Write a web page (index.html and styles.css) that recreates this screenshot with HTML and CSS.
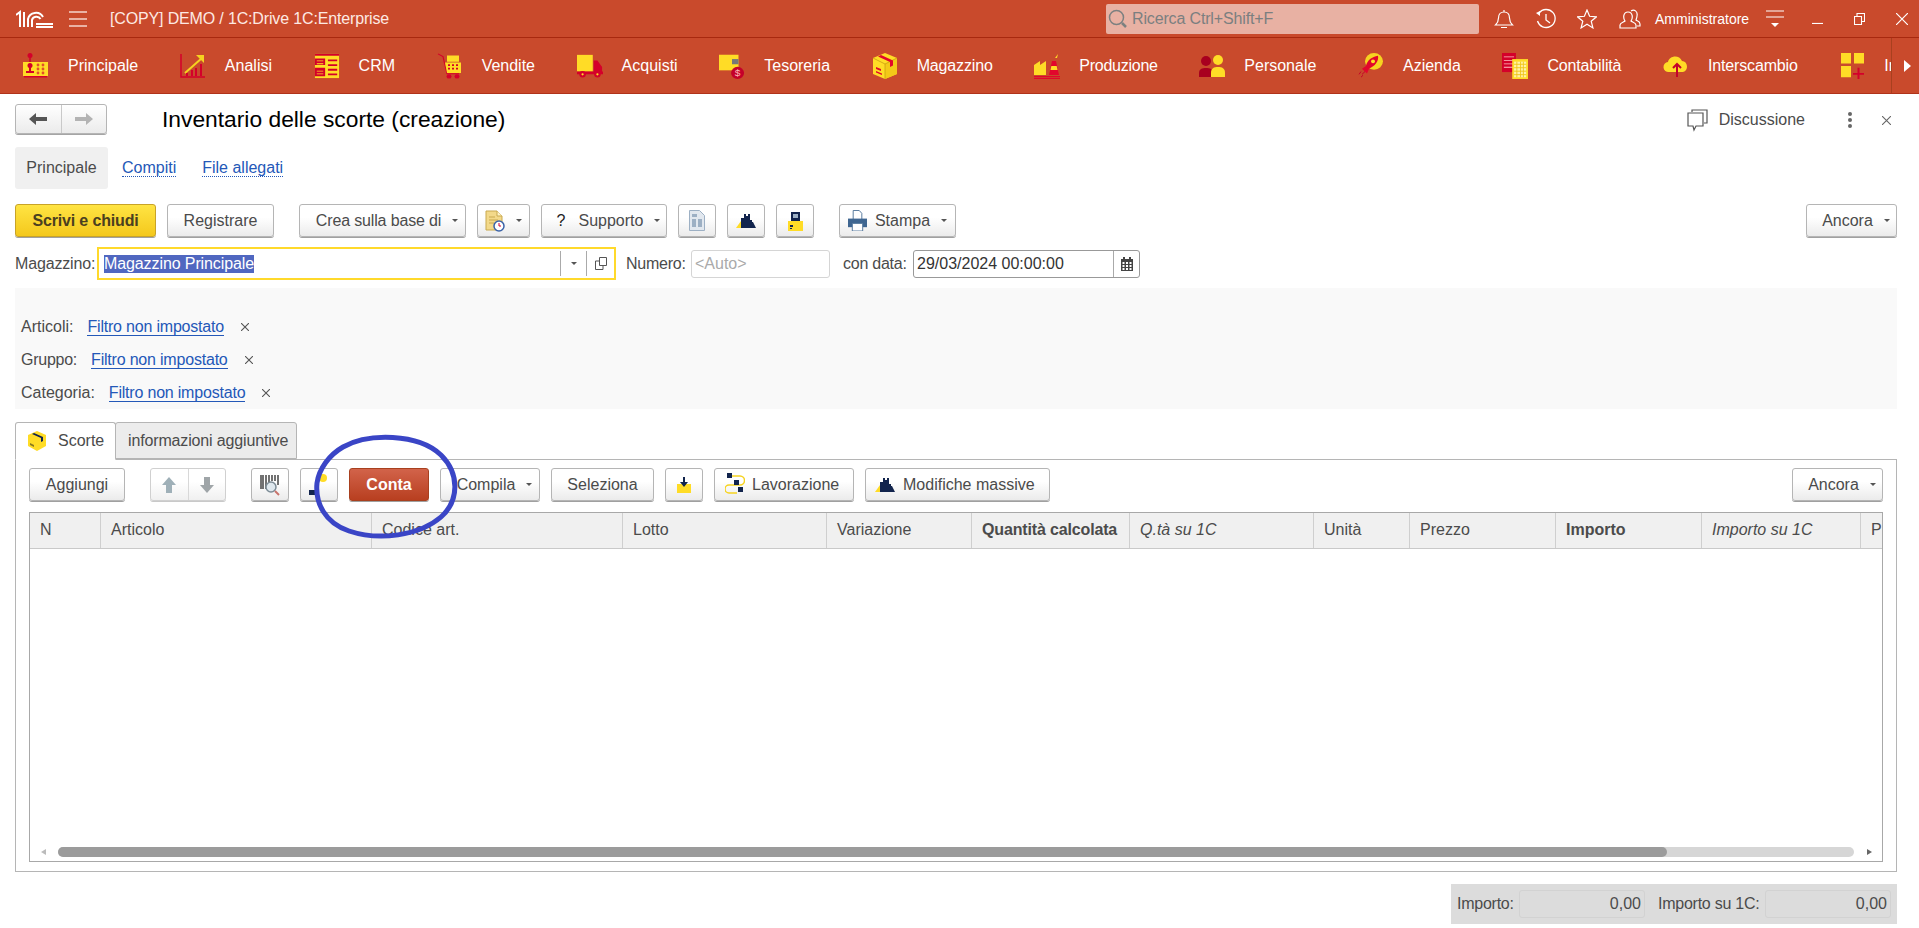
FILE: index.html
```html
<!DOCTYPE html>
<html lang="en">
<head>
  <meta charset="UTF-8">
  <title>Inventario delle scorte (creazione)</title>
  <link rel="stylesheet" href="styles.css">
</head>
<body>
  <!-- window title bar -->
  <div class="topbar">
    <svg class="logo" width="38" height="18" viewBox="0 0 38 18" fill="none" stroke="#fff" stroke-width="2"><path d="M0 5l4-3v15M8 2v15M12 17V9a8 7.500 0 0 1 15-2M16 17v-7a4.500 4 0 0 1 8.500-1M20 14h17M20 17h17"/></svg>
    <svg class="hamburger" width="18" height="16" viewBox="0 0 18 16" stroke="#f5d5cb" stroke-width="1.4"><path d="M0 1h18M0 8h18M0 15h18"/></svg>
    <span class="app-title">[COPY] DEMO / 1C:Drive 1C:Enterprise</span>
    <div class="search">
      <svg width="20" height="20" viewBox="0 0 20 20" fill="none" stroke="#7c8080"><circle cx="8.5" cy="8.5" r="7" stroke-width="1.5"/><path d="M14 14l4 4" stroke-width="2.5"/></svg>
      <span class="tight">Ricerca Ctrl+Shift+F</span>
    </div>
    <svg class="t-bell" width="20" height="20" viewBox="0 0 20 20" fill="none" stroke="#fff" stroke-width="1.2"><path d="M1.5 16c2-2 3-3 3-7 0-4 2.500-6 5.500-6s5.500 2 5.500 6c0 4 1 5 3 7zM10 3V1M7 18.500h6"/></svg>
    <svg class="t-hist" width="22" height="22" viewBox="0 0 22 22" fill="none" stroke="#fff" stroke-width="1.3"><path d="M4 5a9 9 0 1 1-1.500 8M11 6v6l4 3"/><path d="M1 5l4-2v5z" fill="#fff" stroke="none"/></svg>
    <svg class="t-star" width="20" height="20" viewBox="0 0 20 20" fill="none" stroke="#fff" stroke-width="1.2"><path d="M10 1l2.600 6.300 6.900.500-5.300 4.400 1.700 6.700L10 15.300l-5.900 3.600 1.700-6.700L.5 7.800l6.900-.5z"/></svg>
    <svg class="t-user" width="22" height="20" viewBox="0 0 22 20" fill="none" stroke="#fff" stroke-width="1.2"><path d="M1 19v-3c0-2 4-3 5-4-2-3-2-9 3-9s5 6 3 9c1 1 5 2 5 4v3zM12 2c3-2 7 0 6 5 0 2-1 3-1 4 1 1 4 1 4 4v2h-3"/></svg>
    <span class="user-name">Amministratore</span>
    <svg class="t-menu" width="18" height="18" viewBox="0 0 18 18" stroke="#fff" stroke-width="1.2"><path d="M0 1h18M0 7h18"/><path d="M5 13h8l-4 4z" fill="#fff" stroke="none"/></svg>
    <svg class="t-min" width="11" height="11" viewBox="0 0 11 11" stroke="#fff" stroke-width="1.2"><path d="M0 10.500h11"/></svg>
    <svg class="t-max" width="11" height="12" viewBox="0 0 11 12" fill="none" stroke="#fff" stroke-width="1.1"><path d="M.5 3.500h7v8h-7zM3 3V.5h7.500v8H8"/></svg>
    <svg class="t-close" width="12" height="12" viewBox="0 0 12 12" stroke="#fff" stroke-width="1.2"><path d="M0 0l12 12M12 0L0 12"/></svg>
  </div>

  <!-- section panel -->
  <div class="sections">
    <div class="section-list">
      <div class="section">
        <svg class="sec-icon" viewBox="0 0 26 26"><circle cx="7" cy="2.500" r="2.500" fill="#d4002a"/><path d="M6.200 4h1.600v6H6.200z" fill="#d4002a"/><path d="M0 9h25v14H0z" fill="#ffdc26"/><path d="M1 23h23v1.500H1z" fill="#d4002a"/><circle cx="7" cy="12.500" r="2.500" fill="#d4002a"/><path d="M6 14h2v4H6zM3 18h8v2H3z" fill="#d4002a"/><g fill="#e2502a"><circle cx="15" cy="12" r="1.400"/><circle cx="20" cy="12" r="1.400"/><circle cx="15" cy="16" r="1.400"/><circle cx="20" cy="16" r="1.400"/><circle cx="15" cy="20" r="1.400"/><circle cx="20" cy="20" r="1.400"/></g></svg>
        <span>Principale</span>
      </div>
      <div class="section">
        <svg class="sec-icon" viewBox="0 0 26 26"><path d="M1 1v23h24" fill="none" stroke="#d4002a" stroke-width="1.500"/><path d="M5 20l17-15" stroke="#f5d320" stroke-width="2" fill="none"/><path d="M16 2h8v8z" fill="#f5d320"/><path d="M6 20h2v3H6zM11 17h2v6h-2zM15 15h2v8h-2zM20 11h2v12h-2z" fill="#d4002a"/></svg>
        <span>Analisi</span>
      </div>
      <div class="section">
        <svg class="sec-icon" viewBox="0 0 28 26"><path d="M1 0h26v26H1z" fill="#ffdc26"/><path d="M1 0h26v2H1zM1 5h11v7H1zM1 15h11v9H1z" fill="#d4002a"/><path d="M3 7h7v1H3zM3 10h7v1H3zM3 18h7v1H3zM3 21h7v1H3z" fill="#ffdc26"/><path d="M15 6h10v2H15zM15 11h10v2H15zM15 16h10v2H15zM15 21h10v2H15z" fill="#d4002a"/></svg>
        <span>CRM</span>
      </div>
      <div class="section">
        <svg class="sec-icon" viewBox="0 0 26 30" preserveAspectRatio="none"><path d="M1 1l5 3 4 20h12" fill="none" stroke="#d4002a" stroke-width="1.200"/><path d="M10 3h12v7H10zM8 11h16v12H10z" fill="#ffdc26"/><path d="M11 13h2v2h-2zM15 13h2v2h-2zM19 13h2v2h-2zM11 17h2v2h-2zM15 17h2v2h-2zM19 17h2v2h-2z" fill="#d4002a"/><circle cx="12" cy="27" r="2.500" fill="#d4002a"/><circle cx="20" cy="27" r="2.500" fill="#d4002a"/></svg>
        <span>Vendite</span>
      </div>
      <div class="section">
        <svg class="sec-icon" viewBox="0 0 28 26"><path d="M0 1h17v18H0z" fill="#ffdc26"/><path d="M18 7h4l5 7v5H18zM0 19h28v3H0z" fill="#d4002a"/><circle cx="6" cy="22" r="3.500" fill="#d4002a"/><circle cx="22" cy="22" r="3.500" fill="#d4002a"/><circle cx="6" cy="22" r="1.200" fill="#ffdc26"/><circle cx="22" cy="22" r="1.200" fill="#ffdc26"/></svg>
        <span>Acquisti</span>
      </div>
      <div class="section">
        <svg class="sec-icon" viewBox="0 0 28 30" preserveAspectRatio="none"><path d="M0 2h21v18H0z" fill="#ffdc26"/><path d="M14 7h7v6h-7z" fill="#777"/><circle cx="20" cy="23" r="7" fill="#c4002a"/><text class="coin" x="20" y="27">$</text></svg>
        <span>Tesoreria</span>
      </div>
      <div class="section">
        <svg class="sec-icon" viewBox="0 0 26 26"><path d="M13 0l12 5v16l-12 5-12-5V5z" fill="#ffdc26"/><path d="M13 11l12-6v16l-12 5z" fill="#f3c918"/><path d="M13 11v15M1 5l12 6 12-6" fill="none" stroke="#c99e10" stroke-width=".8"/><path d="M6 3.500L9 2l12 5.500v5l-3 1.500V9z" fill="#e2062c"/><path d="M4 14l5 2v2l-5-2zM4 18l6 2.500V22l-6-2.500z" fill="#e2062c"/></svg>
        <span class="tight">Magazzino</span>
      </div>
      <div class="section">
        <svg class="sec-icon" viewBox="0 0 26 26"><path d="M0 12l6-4v4l6-4v14H0z" fill="#ffdc26"/><path d="M15 22l3-14h4l3 14z" fill="#e2062c"/><path d="M17.300 13h5.400l.8 4h-7z" fill="#ffdc26"/><path d="M21 5l3-4-1 4z" fill="#ffdc26"/><path d="M0 23h26v1.200H0zM0 25h26v1H0z" fill="#e2062c"/></svg>
        <span class="tighter">Produzione</span>
      </div>
      <div class="section">
        <svg class="sec-icon" viewBox="0 0 26 26"><circle cx="7" cy="8" r="5" fill="#a8001f"/><path d="M0 24v-4c0-4 3-5 7-5s7 1 7 5v4z" fill="#a8001f"/><circle cx="19" cy="7" r="5" fill="#ffdc26"/><path d="M12 24v-4c0-5 3-6 7-6s7 1 7 6v4z" fill="#ffdc26"/></svg>
        <span>Personale</span>
      </div>
      <div class="section">
        <svg class="sec-icon" viewBox="0 0 26 28" preserveAspectRatio="none"><circle cx="16" cy="9" r="9" fill="#f6d320"/><path d="M20 3c1 6-3 11-9 14l-2 5-3-3-2-2 4-3c1-6 6-10 12-11z" fill="#e2062c"/><path d="M7 20l-3 3M5 24l-2 2M3 20l-2 3" stroke="#c4002a"/><circle cx="15" cy="9" r="2" fill="#ffdc26"/></svg>
        <span>Azienda</span>
      </div>
      <div class="section">
        <svg class="sec-icon" viewBox="0 0 28 30" preserveAspectRatio="none"><path d="M0 0h15v22H0z" fill="#d4002a"/><path d="M2 4h11v1H2zM2 8h11v1H2zM2 12h11v1H2zM2 16h11v1H2z" fill="#ffc2c2"/><path d="M11 7h17v23H11z" fill="#ffdc26"/><path d="M13 10h13v18H13z" fill="#fff3a8"/><path d="M13 13h13M13 17h13M13 21h13M13 25h13M16 10v18M20 10v18M23 10v18" stroke="#f0c514"/></svg>
        <span class="tight">Contabilità</span>
      </div>
      <div class="section">
        <svg class="sec-icon" viewBox="0 0 26 26"><path d="M6 19a5 5 0 0 1-1-10c1-6 11-8 14-1 6 0 7 10 1 11z" fill="#ffdc26"/><path d="M14 24V12M10 15l4-4 4 4" fill="none" stroke="#c4002a" stroke-width="2"/></svg>
        <span class="tight">Interscambio</span>
      </div>
      <div class="section">
        <svg class="sec-icon" viewBox="0 0 26 30" preserveAspectRatio="none"><path d="M2 0h10v12H2zM15 0h10v12H15zM2 15h10v13H2z" fill="#ffdc26"/><path d="M14 23h11v2H14zM18.500 17h2v13h-2z" fill="#d4002a"/></svg>
        <span>Impostazioni</span>
      </div>
    </div>
    <div class="sections-more"><svg width="7" height="12" viewBox="0 0 7 12"><path d="M0 0l7 6-7 6z" fill="#fff"/></svg></div>
  </div>

  <div class="main">
    <div class="form-head">
      <div class="nav-pair">
        <span class="nav-cell">
          <svg width="18" height="12" viewBox="0 0 18 12"><path d="M0 6l7-6v4h11v4H7v4z" fill="#555"/></svg>
        </span>
        <span class="nav-cell">
          <svg width="18" height="12" viewBox="0 0 18 12"><path d="M18 6l-7-6v4H0v4h11v4z" fill="#b3b3b3"/></svg>
        </span>
      </div>
      <h1 class="form-title">Inventario delle scorte (creazione)</h1>
      <div class="head-tools">
        <svg class="disc-icon" width="21" height="23" viewBox="0 0 21 23" fill="none" stroke="#555" stroke-width="1.200"><path d="M5 3V1h15v13h-3M1 4h15v13H9l-2 4-1-4H1z"/></svg>
        <span class="disc-label">Discussione</span>
        <svg class="dots" width="4" height="18" viewBox="0 0 4 18" fill="#666"><circle cx="2" cy="3" r="2"/><circle cx="2" cy="9" r="2"/><circle cx="2" cy="15" r="2"/></svg>
        <svg class="head-close" width="9" height="9" viewBox="0 0 9 9" stroke="#666" stroke-width="1.100"><path d="M0 0l9 9M9 0L0 9"/></svg>
      </div>
    </div>

    <div class="views">
      <span class="view-active">Principale</span>
      <a class="view-link view-compiti">Compiti</a>
      <a class="view-link view-file">File allegati</a>
    </div>

    <div class="toolbar toolbar-main">
      <button class="btn btn-primary w-scrivi"><span class="tight">Scrivi e chiudi</span></button>
      <button class="btn w-reg">Registrare</button>
      <button class="btn has-caret w-crea group-start"><span class="tight">Crea sulla base di</span><i class="caret"></i></button>
      <button class="btn w-docclock">
        <svg width="20" height="22" viewBox="0 0 20 22"><path d="M1 1h11l5 5v14H1z" fill="#f3d98a" stroke="#c9a94f"/><path d="M12 1v5h5" fill="#fff3c8" stroke="#c9a94f"/><path d="M4 7h6M4 10h9M4 13h5" stroke="#c9a94f"/><circle cx="14" cy="16" r="5" fill="#fff" stroke="#3b63a8" stroke-width="1.500"/><path d="M14 13v3h2" stroke="#d4002a" fill="none"/></svg>
        <i class="caret"></i>
      </button>
      <button class="btn has-caret w-supporto"><span class="qmark">?</span>Supporto<i class="caret"></i></button>
      <button class="btn btn-icon">
        <svg width="16" height="21" viewBox="0 0 16 21"><path d="M.5.5h10l5 5v15H.5z" fill="#e2e8ef" stroke="#9db0c4"/><path d="M3 4h5v3H3zM3 9h4v8H3zM9 9h4v8H9z" fill="#9db0c4"/></svg>
      </button>
      <button class="btn btn-icon">
        <svg width="20" height="14" viewBox="0 0 20 14"><path d="M0 14l5-7h5v7z" fill="#ffdc26"/><path d="M5 14V4h3V0h2v2h2V0h2v6h2v2h1l3 6z" fill="#12244d"/></svg>
      </button>
      <button class="btn btn-icon">
        <svg width="15" height="20" viewBox="0 0 15 20"><path d="M3 1h9v9H3z" fill="#12244d"/><path d="M5 3h5v4H5z" fill="#9db0c4"/><path d="M0 10h15v10H0z" fill="#ffdc26"/><path d="M2 14h3v2H2zM2 17h2v1H2z" fill="#12244d"/></svg>
      </button>
      <button class="btn w-stampa group-start">
        <svg class="print-icon" width="19" height="21" viewBox="0 0 22 22" preserveAspectRatio="none"><path d="M6 .5h7l3 3V10H6z" fill="#fff" stroke="#4a6f96"/><path d="M0 9h22v9H0z" fill="#3f6691"/><path d="M5 14h12v8H5z" fill="#fff" stroke="#4a6f96"/></svg>
        Stampa<i class="caret"></i>
      </button>
      <button class="btn has-caret w-ancora push-right">Ancora<i class="caret"></i></button>
    </div>

    <div class="fields">
      <label class="lbl lbl-mag"><span class="tight">Magazzino:</span></label>
      <div class="field-focus">
        <span class="selected">Magazzino Principale</span>
        <span class="field-tool tool-caret"><i class="caret"></i></span>
        <span class="field-tool tool-open">
          <svg width="12" height="13" viewBox="0 0 12 13" fill="none" stroke="#555"><path d="M4.500.5h7v8h-7zM4 4H.5v8.500H8V9"/></svg>
        </span>
      </div>
      <label class="lbl lbl-num"><span class="tighter">Numero:</span></label>
      <div class="input input-auto">&lt;Auto&gt;</div>
      <label class="lbl lbl-date"><span class="tighter">con data:</span></label>
      <div class="input input-date">
        <span class="date-val">29/03/2024 00:00:00</span>
        <span class="date-tool">
          <svg width="12" height="14" viewBox="0 0 12 14"><path d="M0 2h12v12H0z" fill="#444"/><path d="M2 0h2v3H2zM8 0h2v3H8z" fill="#444"/><path d="M1.500 5h2v2h-2zM5 5h2v2H5zM8.500 5h2v2h-2zM1.500 8h2v2h-2zM5 8h2v2H5zM8.500 8h2v2h-2zM1.500 11h2v2h-2zM5 11h2v2H5zM8.500 11h2v2h-2z" fill="#fff"/></svg>
        </span>
      </div>
    </div>

    <div class="filters">
      <div class="filter-row">
        <span>Articoli:</span><a class="filter-link">Filtro non impostato</a>
        <svg class="filter-x" width="8" height="8" viewBox="0 0 8 8" stroke="#555" stroke-width="1.100"><path d="M0 0l8 8M8 0L0 8"/></svg>
      </div>
      <div class="filter-row">
        <span class="tighter">Gruppo:</span><a class="filter-link">Filtro non impostato</a>
        <svg class="filter-x" width="8" height="8" viewBox="0 0 8 8" stroke="#555" stroke-width="1.100"><path d="M0 0l8 8M8 0L0 8"/></svg>
      </div>
      <div class="filter-row">
        <span>Categoria:</span><a class="filter-link">Filtro non impostato</a>
        <svg class="filter-x" width="8" height="8" viewBox="0 0 8 8" stroke="#555" stroke-width="1.100"><path d="M0 0l8 8M8 0L0 8"/></svg>
      </div>
    </div>

    <div class="tabs">
      <div class="tab tab-on">
        <svg class="tab-icon" width="20" height="20" viewBox="0 0 20 20"><path d="M10 0l9 4v11l-9 5-9-5V4z" fill="#ffdc26"/><path d="M5 3l2-1 9 4v4l-2 1V7z" fill="#12244d"/><path d="M3 12l4 2v2l-4-2z" fill="#8a7a20"/></svg>
        Scorte
      </div>
      <div class="tab tab-off"><span class="tight">informazioni aggiuntive</span></div>
    </div>

    <div class="tab-panel">
      <div class="toolbar toolbar-table">
        <button class="btn w-aggiungi">Aggiungi</button>
        <div class="btn-pair group-start">
          <span class="pair-cell"><svg width="14" height="16" viewBox="0 0 14 16"><path d="M7 0l7 8H10v8H4V8H0z" fill="#9fb0b8"/></svg></span>
          <span class="pair-cell"><svg width="14" height="16" viewBox="0 0 14 16"><path d="M7 16l7-8H10V0H4v8H0z" fill="#9fa5a8"/></svg></span>
        </div>
        <button class="btn btn-icon group-start">
          <svg width="20" height="22" viewBox="0 0 20 22"><path d="M1 1v14M3 1v14M6 1v14M9 1v10M12 1v6M15 1v6M18 1v10" stroke="#444" stroke-width="1.500"/><circle cx="11" cy="13" r="5" fill="#dfe8ee" stroke="#7d8c96" stroke-width="1.500"/><path d="M15 17l4 4" stroke="#c9746c" stroke-width="2"/></svg>
        </button>
        <button class="btn btn-icon">
          <svg width="20" height="22" viewBox="0 0 20 22"><path d="M0 16h6v5H0z" fill="#12244d"/><circle cx="14" cy="4" r="4" fill="#ffdc26"/></svg>
        </button>
        <button class="btn btn-red w-conta">Conta</button>
        <button class="btn has-caret w-compila">Compila<i class="caret"></i></button>
        <button class="btn w-seleziona">Seleziona</button>
        <button class="btn btn-icon">
          <svg width="14" height="16" viewBox="0 0 14 16"><path d="M0 7h14v9H0z" fill="#ffdc26"/><path d="M6 0h2v5h3l-4 5-4-5h3z" fill="#12244d"/></svg>
        </button>
        <button class="btn w-lav">
          <svg class="lav-icon" width="20" height="24" viewBox="0 0 20 24"><path d="M7 3h8a3 3 0 0 1 0 9H4a4 4 0 0 0 0 8h8" fill="none" stroke="#f6d320" stroke-width="1.500"/><path d="M2 0h5v5H2zM9 7h5v5H9zM13 14h5v5h-5z" fill="#12244d"/></svg>
          Lavorazione
        </button>
        <button class="btn w-mod">
          <svg class="mod-icon" width="20" height="14" viewBox="0 0 20 14"><path d="M0 14l5-7h5v7z" fill="#ffdc26"/><path d="M5 14V4h3V0h2v2h2V0h2v6h2v2h1l3 6z" fill="#12244d"/></svg>
          Modifiche massive
        </button>
        <button class="btn has-caret w-ancora2 push-right">Ancora<i class="caret"></i></button>
      </div>

      <div class="grid">
        <div class="grid-head">
          <div class="cell">N</div>
          <div class="cell">Articolo</div>
          <div class="cell">Codice art.</div>
          <div class="cell">Lotto</div>
          <div class="cell">Variazione</div>
          <div class="cell cell-bold"><span class="tight">Quantità calcolata</span></div>
          <div class="cell cell-ital">Q.tà su 1C</div>
          <div class="cell">Unità</div>
          <div class="cell">Prezzo</div>
          <div class="cell cell-bold">Importo</div>
          <div class="cell cell-ital">Importo su 1C</div>
          <div class="cell cell-last">Prezzo su 1C</div>
        </div>
        <div class="grid-body"></div>
        <div class="scroll">
          <i class="scroll-left"></i>
          <div class="scroll-track"><div class="scroll-thumb"></div></div>
          <i class="scroll-right"></i>
        </div>
      </div>
    </div>

    <div class="totals">
      <div class="totals-box">
        <span class="tot-lbl1 tighter">Importo:</span>
        <span class="tot-field">0,00</span>
        <span class="tot-lbl2 tighter">Importo su 1C:</span>
        <span class="tot-field">0,00</span>
      </div>
    </div>
  </div>

  <!-- hand drawn annotation over the screenshot -->
  <svg class="annotation" width="150" height="110" viewBox="0 0 150 110" fill="none" stroke="#3a45c6" stroke-width="5" stroke-linecap="round"><path d="M30 14C55 0 105 0 128 22c19 19 18 46 0 62-22 19-62 24-92 14C12 90 2 70 4 50 6 36 16 22 30 14z"/></svg>
</body>
</html>
```

FILE: styles.css
```css
* {
  box-sizing: border-box;
}
html, body {
  margin: 0;
  height: 928px;
  overflow: hidden;
}
body {
  font-family: "Liberation Sans", Arial, sans-serif;
  font-size: 16px;
  color: #4b4b4b;
  background: #fff;
  position: relative;
}
.tight {
  letter-spacing: -0.15px;
}
.tighter {
  letter-spacing: -0.25px;
}

/* title bar */
.topbar {
  height: 38px;
  background: #c94a2c;
  border-bottom: 1px solid #a8290f;
  display: flex;
  align-items: center;
  color: #fff;
}
.logo {
  margin-left: 16px;
}
.hamburger {
  margin-left: 15px;
}
.app-title {
  margin-left: 23px;
  width: 996px;
  color: #fde9e3;
  white-space: nowrap;
  letter-spacing: -0.15px;
}
.search {
  width: 373px;
  height: 30px;
  background: #e8b1a3;
  border-radius: 2px;
  color: #7b7f80;
  display: flex;
  align-items: center;
  padding-left: 2px;
  gap: 4px;
}
.t-bell {
  margin-left: 15px;
}
.t-hist {
  margin-left: 21px;
}
.t-star {
  margin-left: 20px;
}
.t-user {
  margin-left: 22px;
}
.user-name {
  margin-left: 14px;
  font-size: 14px;
  width: 94px;
  white-space: nowrap;
}
.t-menu {
  margin-left: 17px;
}
.t-min {
  margin-left: 28px;
}
.t-max {
  margin-left: 31px;
}
.t-close {
  margin-left: 31px;
}

/* sections */
.sections {
  height: 56px;
  background: #c94a2c;
  border-bottom: 1px solid #b0331a;
  display: flex;
  color: #fff;
}
.section-list {
  width: 1891px;
  display: flex;
  align-items: center;
  gap: 41.6px;
  padding-left: 23px;
  overflow: hidden;
  white-space: nowrap;
}
.section {
  display: flex;
  align-items: center;
  gap: 19px;
  flex: none;
}
.sec-icon {
  width: 26px;
  height: 26px;
  flex: none;
}
.coin {
  font-size: 11px;
  fill: #ffb4b4;
  text-anchor: middle;
}
.sections-more {
  flex: 1;
  border-left: 1px solid #a8401f;
  display: flex;
  align-items: center;
  padding-left: 12px;
}

/* form */
.main {
  padding: 0 22px 0 15px;
}
.form-head {
  margin-top: 10px;
  height: 30px;
  display: flex;
  align-items: center;
}
.nav-pair {
  width: 92px;
  height: 30px;
  display: flex;
  border: 1px solid #b5b5b5;
  border-radius: 3px;
  background: linear-gradient(#fff, #ebebeb);
  box-shadow: 0 1px 0 #a5a5a5;
}
.nav-cell {
  flex: 1;
  display: flex;
  align-items: center;
  justify-content: center;
}
.nav-cell + .nav-cell {
  border-left: 1px solid #c9c9c9;
}
.form-title {
  margin: 0 0 0 55px;
  font-size: 22.8px;
  font-weight: normal;
  color: #000;
}
.head-tools {
  margin-left: auto;
  padding-top: 2px;
  display: flex;
  align-items: center;
}
.disc-label {
  margin-left: 11px;
}
.dots {
  margin-left: 43px;
}
.head-close {
  margin-left: 30px;
  margin-right: 6px;
}

.views {
  margin-top: 13px;
  height: 42px;
  display: flex;
  align-items: center;
}
.view-active {
  width: 93px;
  height: 42px;
  line-height: 42px;
  text-align: center;
  background: #f0f0f0;
  border-radius: 3px;
}
.view-link {
  color: #2458b8;
  border-bottom: 1px dotted #2458b8;
  line-height: 17px;
}
.view-compiti {
  margin-left: 14px;
}
.view-file {
  margin-left: 26px;
}

/* buttons */
.toolbar {
  display: flex;
  gap: 11px;
}
.toolbar-main {
  margin-top: 15px;
}
.btn {
  height: 33px;
  padding: 0;
  border: 1px solid #b5b5b5;
  border-radius: 3px;
  background: linear-gradient(#fff 40%, #ebebeb);
  box-shadow: 0 1px 0 #a0a0a0;
  font: 16px "Liberation Sans", Arial, sans-serif;
  color: #4b4b4b;
  display: flex;
  align-items: center;
  justify-content: center;
  white-space: nowrap;
  flex: none;
}
.has-caret {
  padding-left: 9px;
}
.btn-primary {
  background: linear-gradient(#ffe443, #f4c81c);
  border-color: #c8a328;
  font-weight: bold;
  color: #4a4020;
}
.btn-red {
  background: linear-gradient(#d2634a, #b83f20);
  border-color: #a8401f;
  font-weight: bold;
  color: #fff;
}
.btn-icon {
  width: 38px;
}
.caret {
  display: inline-block;
  width: 0;
  height: 0;
  border-left: 3px solid transparent;
  border-right: 3px solid transparent;
  border-top: 3px solid #555;
  margin-left: 11px;
}
.group-start {
  margin-left: 14px;
}
.push-right {
  margin-left: auto;
}
.w-scrivi { width: 141px; }
.w-reg { width: 107px; }
.w-crea { width: 167px; }
.w-docclock { width: 53px; }
.w-supporto { width: 126px; }
.w-stampa { width: 117px; }
.w-ancora { width: 91px; }
.w-ancora2 { width: 91px; }
.w-aggiungi { width: 96px; }
.w-conta { width: 80px; }
.w-compila { width: 100px; }
.w-seleziona { width: 103px; }
.w-lav { width: 140px; justify-content: flex-start; padding-left: 10px; }
.w-mod { width: 185px; justify-content: flex-start; padding-left: 9px; }
.qmark {
  color: #222;
  margin-right: 13px;
}
.print-icon {
  margin-right: 8px;
}
.lav-icon {
  margin-right: 7px;
}
.mod-icon {
  margin-right: 8px;
}

/* field row */
.fields {
  margin-top: 10px;
  height: 33px;
  display: flex;
  align-items: center;
}
.lbl-mag {
  width: 82px;
  white-space: nowrap;
}
.field-focus {
  width: 519px;
  height: 33px;
  border: 2px solid #ffd92b;
  display: flex;
  align-items: center;
  padding-left: 5px;
}
.selected {
  background: #5067c0;
  color: #fff;
  line-height: 18px;
  letter-spacing: -0.1px;
}
.field-tool {
  width: 26px;
  height: 25px;
  border-left: 1px solid #aaa;
  display: flex;
  align-items: center;
  justify-content: center;
}
.tool-caret {
  margin-left: auto;
}
.tool-caret .caret {
  margin: 0;
}
.tool-open {
  width: 28px;
}
.lbl-num {
  margin-left: 10px;
  width: 65px;
}
.input {
  height: 28px;
  border: 1px solid #d5d5d5;
  border-radius: 3px;
  display: flex;
  align-items: center;
}
.input-auto {
  width: 139px;
  color: #aaa;
  padding-left: 3px;
}
.lbl-date {
  margin-left: 13px;
  width: 70px;
}
.input-date {
  width: 227px;
  border-color: #999;
  color: #333;
  padding-left: 3px;
}
.date-val {
  flex: 1;
}
.date-tool {
  width: 26px;
  height: 26px;
  border-left: 1px solid #aaa;
  display: flex;
  align-items: center;
  justify-content: center;
}

/* filters */
.filters {
  margin-top: 8px;
  height: 121px;
  background: #f9f9f9;
  padding: 22px 0 0 6px;
}
.filter-row {
  height: 33px;
  display: flex;
  align-items: center;
}
.filter-link {
  margin-left: 14px;
  color: #2458b8;
  border-bottom: 1px solid #2458b8;
  line-height: 17px;
  letter-spacing: -0.2px;
}
.filter-x {
  margin-left: 17px;
}

/* tabs */
.tabs {
  margin-top: 13px;
  height: 38px;
  display: flex;
  position: relative;
  z-index: 1;
}
.tab {
  border: 1px solid #b5b5b5;
  border-radius: 3px 3px 0 0;
  display: flex;
  align-items: center;
}
.tab-on {
  width: 101px;
  background: #fff;
  border-bottom-color: #fff;
  padding-left: 11px;
}
.tab-icon {
  margin-right: 11px;
}
.tab-off {
  width: 182px;
  height: 37px;
  background: #ececec;
  margin-left: -1px;
  padding-left: 12px;
  white-space: nowrap;
}
.tab-panel {
  margin-top: -1px;
  height: 413px;
  border: 1px solid #b5b5b5;
  padding: 8px 13px 0 13px;
}
.btn-pair {
  width: 76px;
  height: 33px;
  display: flex;
  border: 1px solid #d0d0d0;
  border-radius: 3px;
  background: linear-gradient(#fff 40%, #f0f0f0);
  box-shadow: 0 1px 0 #c9c9c9;
}
.pair-cell {
  flex: 1;
  display: flex;
  align-items: center;
  justify-content: center;
}
.pair-cell + .pair-cell {
  border-left: 1px solid #d8d8d8;
}

/* table */
.grid {
  margin-top: 11px;
  height: 350px;
  border: 1px solid #a8a8a8;
  position: relative;
  overflow: hidden;
}
.grid-head {
  height: 36px;
  display: grid;
  grid-template-columns: 71px 271px 251px 204px 145px 158px 184px 96px 146px 146px 159px 200px;
  background: #f0f0f0;
  border-bottom: 1px solid #c9c9c9;
}
.cell {
  padding-left: 10px;
  line-height: 33px;
  border-right: 1px solid #cfcfcf;
  white-space: nowrap;
  overflow: hidden;
}
.cell-bold {
  font-weight: bold;
}
.cell-ital {
  font-style: italic;
}
.cell-last {
  border-right: none;
}
.grid-body {
  height: 298px;
  background: #fff;
}
.scroll {
  height: 10px;
  display: flex;
  align-items: center;
  padding-left: 11px;
}
.scroll-left {
  width: 0;
  height: 0;
  border-top: 3px solid transparent;
  border-bottom: 3px solid transparent;
  border-right: 5px solid #bbb;
}
.scroll-track {
  margin-left: 12px;
  width: 1796px;
  height: 10px;
  border-radius: 5px;
  background: #d6d6d6;
}
.scroll-thumb {
  width: 1609px;
  height: 10px;
  border-radius: 5px;
  background: #9b9b9b;
}
.scroll-right {
  margin-left: 13px;
  width: 0;
  height: 0;
  border-top: 3px solid transparent;
  border-bottom: 3px solid transparent;
  border-left: 5px solid #666;
}

/* totals */
.totals {
  margin-top: 12px;
  display: flex;
  justify-content: flex-end;
}
.totals-box {
  width: 446px;
  height: 40px;
  background: #dcdcdc;
  display: flex;
  align-items: center;
  padding-left: 6px;
  white-space: nowrap;
}
.tot-lbl1 {
  width: 62px;
}
.tot-lbl2 {
  margin-left: 13px;
  width: 107px;
}
.tot-field {
  width: 126px;
  height: 28px;
  line-height: 26px;
  border: 1px solid #d2d2d2;
  border-radius: 3px;
  text-align: right;
  padding-right: 3px;
}

.annotation {
  position: absolute;
  left: 313px;
  top: 433px;
}
```
